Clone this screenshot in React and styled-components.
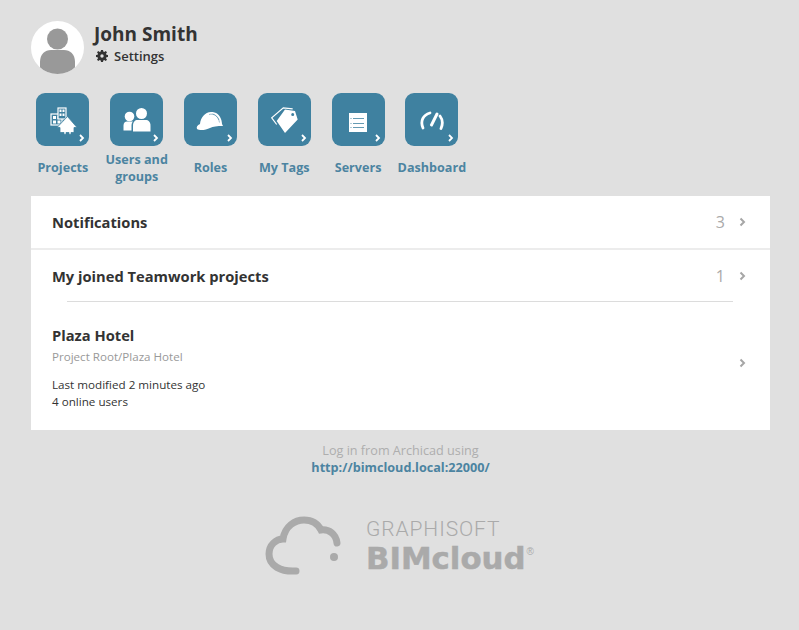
import React from "react";
import styled, { createGlobalStyle } from "styled-components";

const GlobalStyle = createGlobalStyle`
  html, body {
    margin: 0;
    padding: 0;
    background: #e0e0e0;
    font-family: "Open Sans", "Liberation Sans", sans-serif;
  }
`;

const Page = styled.div`
  width: 799px;
  height: 630px;
  overflow: hidden;
  box-sizing: border-box;
  padding: 21px 29px 0 31px;
`;

const Header = styled.div`
  display: flex;
  align-items: flex-start;
  gap: 10px;
`;

const Avatar = styled.div`
  width: 53px;
  height: 53px;
  border-radius: 50%;
  background: #fff;
  overflow: hidden;
`;

const UserName = styled.div`
  font-size: 19px;
  line-height: 26px;
  font-weight: 700;
  color: #333;
`;

const SettingsLink = styled.div`
  display: flex;
  align-items: center;
  gap: 6px;
  margin: 0 0 0 2px;
  font-size: 13px;
  line-height: 18px;
  font-weight: 600;
  color: #333;
`;

const Nav = styled.div`
  display: flex;
  margin: 19px 0 0 -5px;
`;

const NavItem = styled.div`
  width: 73.8px;
  display: flex;
  flex-direction: column;
  align-items: center;
`;

const Tile = styled.div`
  position: relative;
  width: 53px;
  height: 53px;
  border-radius: 9px;
  background: #3f81a0;
  display: flex;
  align-items: center;
  justify-content: center;
`;

const TileArrow = styled.svg`
  position: absolute;
  right: 4px;
  bottom: 4px;
`;

const NavLabel = styled.div`
  height: 35px;
  margin-top: 4px;
  display: flex;
  align-items: center;
  text-align: center;
  font-size: 12.6px;
  line-height: 17px;
  font-weight: 700;
  color: #4c84a1;
  white-space: pre-line;
`;

const Panel = styled.div`
  margin-top: 11px;
  width: 739px;
  height: 234px;
  background: #fff;
`;

const Row = styled.div`
  height: ${(p) => (p.$line ? "52px" : "51px")};
  padding: 0 24px 0 21px;
  display: flex;
  align-items: center;
  border-bottom: ${(p) => (p.$line ? "2px solid #ececec" : "none")};
`;

const RowTitle = styled.div`
  flex: 1;
  font-size: 14.7px;
  font-weight: 700;
  color: #333;
`;

const Count = styled.div`
  font-size: 16px;
  color: #aaa;
  margin-right: 14px;
`;

const Chevron = styled.svg`
  display: block;
`;

const InnerRule = styled.div`
  height: 1px;
  margin: 0 37px 0 36px;
  background: #dcdcdc;
`;

const ProjectRow = styled.div`
  height: 122px;
  padding: 0 24px 0 21px;
  display: flex;
  align-items: center;
`;

const ProjectInfo = styled.div`
  flex: 1;
  align-self: flex-start;
  padding-top: 23px;
`;

const ProjectName = styled.div`
  font-size: 14.7px;
  line-height: 20px;
  font-weight: 700;
  color: #333;
`;

const ProjectPath = styled.div`
  margin-top: 3px;
  font-size: 11.6px;
  line-height: 18px;
  color: #999;
`;

const ProjectMeta = styled.div`
  margin-top: 10px;
  font-size: 11.65px;
  line-height: 17px;
  color: #333;
`;

const LoginNote = styled.div`
  margin-top: 12px;
  text-align: center;
  font-size: 12.65px;
  line-height: 16.500px;
  color: #aeaeae;
`;

const LoginLink = styled.div`
  font-weight: 700;
  color: #4c84a1;
`;

const Logo = styled.div`
  margin: 41px 0 0 234px;
  display: flex;
  align-items: flex-start;
  gap: 25px;
`;

const LogoText = styled.div`
  padding-top: 1px;
  color: #aaa;
`;

const Graphisoft = styled.div`
  font-family: Roboto, sans-serif;
  font-size: 21px;
  line-height: 24px;
  font-weight: 300;
  letter-spacing: 0.9px;
`;

const Bimcloud = styled.div`
  font-family: "DejaVu Sans", sans-serif;
  font-size: 30.8px;
  line-height: 34px;
  font-weight: 700;
  -webkit-text-stroke: 0.5px #aaa;
  white-space: nowrap;
  sup {
    font-family: "Liberation Sans", sans-serif;
    font-size: 10px;
    font-weight: 400;
    line-height: 0;
    -webkit-text-stroke: 0;
    vertical-align: 14px;
    margin-left: 1px;
  }
`;

const W = "#fff";
const TILE = "#3f81a0";

const ProjectsIcon = () => (
  <svg width="32" height="32" viewBox="0 0 32 32">
    <rect x="4" y="10" width="11" height="11" fill="none" stroke={W} strokeWidth="1.200" />
    <path d="M6 12h3v3H6zM10.500 12h3v3h-3zM6 16.500h3v3H6zM10.500 16.500h3v3h-3z" fill={W} />
    <rect x="11" y="4" width="8" height="11" fill={TILE} stroke={W} strokeWidth="1.200" />
    <path d="M12.500 5.500h2v2.500h-2zM15.500 5.500h2v2.500h-2zM12.500 9.500h2v2.500h-2zM15.500 9.500h2v2.500h-2z" fill={W} />
    <path d="M20.500 12.500l9.500 11h-3v5h-3v2h-2v-2h-3v2h-2v-2h-4v-5h-3z" fill={W} stroke={TILE} strokeWidth="0.800" />
  </svg>
);

const UsersIcon = () => (
  <svg width="28" height="25" viewBox="0 0 28 25">
    <circle cx="6.500" cy="9.500" r="4.800" fill={W} />
    <path d="M.5 23.500v-5c0-2.500 1.500-4 3.500-4h6c-1 1-1.500 2.500-1.500 4v5z" fill={W} />
    <circle cx="18.500" cy="6.500" r="5.500" fill={W} />
    <path d="M10 24.500v-6c0-3.500 2-5.500 4.500-5.500h8c3 0 5 2 5 5.500v6z" fill={W} />
  </svg>
);

const HelmetIcon = () => (
  <svg width="28" height="22" viewBox="0 0 28 22">
    <path d="M1 20c-.8-2 .2-4 3-5 .5-6 5-12 11-12 1 0 2.500 0 3.500.4C23 4.500 26 10 26 15l1 2c-6 0-10 .5-13 2-4 2-10 3-13 1z" fill={W} />
    <path d="M13 5.500c5-1.500 9.500 2 10.500 8M16.500 5c3 .5 5.500 3 6.500 6" fill="none" stroke={TILE} strokeWidth="0.500" />
  </svg>
);

const TagIcon = () => (
  <svg width="28" height="30" viewBox="0 0 28 30">
    <path d="M6.700 19.500L1.700 12.800 13.300 2.800 22.700 3.800" fill="none" stroke={W} strokeWidth="1.200" />
    <path d="M15 4.500L25 6l2.700 8.500L15 28 6.700 16zM22.700 8a1.500 1.500 0 100 3 1.500 1.500 0 000-3z" fill={W} fillRule="evenodd" />
  </svg>
);

const ServerIcon = () => (
  <svg width="20" height="19" viewBox="0 0 20 19" style={{ marginTop: 5 }}>
    <rect x="1" y="0" width="18" height="19" fill={W} />
    <path d="M5 5.500h11M5 10.500h11M5 14.500h11" stroke={TILE} strokeWidth="0.800" />
    <path d="M2.500 5.500h1M2.500 10.500h1M2.500 14.500h1" stroke={TILE} strokeWidth="0.800" />
  </svg>
);

const GaugeIcon = () => (
  <svg width="26" height="22" viewBox="0 0 26 22">
    <path d="M4 19C1 12 4 6 11 4" fill="none" stroke={W} strokeWidth="2.800" strokeLinecap="round" />
    <path d="M21 7c3 4 3 8 1 12.500" fill="none" stroke={W} strokeWidth="2.800" strokeLinecap="round" />
    <path d="M12.500 16L18 5" fill="none" stroke={W} strokeWidth="3" strokeLinecap="round" />
  </svg>
);

const GearIcon = () => (
  <svg width="12" height="12" viewBox="0 0 12 12">
    <path
      d="M5 0h2l.3 1.600 1 .4L9.700 1 11 2.300 10 3.700l.4 1L12 5v2l-1.600.3-.4 1L11 9.700 9.700 11l-1.400-1-1 .4L7 12H5l-.3-1.600-1-.4L2.300 11 1 9.700l1-1.400-.4-1L0 7V5l1.600-.3.4-1L1 2.300 2.300 1l1.400 1 1-.4zM6 4.300a1.700 1.700 0 100 3.400 1.700 1.700 0 000-3.400z"
      fill="#333"
      fillRule="evenodd"
    />
  </svg>
);

const RowChevron = () => (
  <Chevron width="7" height="10" viewBox="0 0 7 10">
    <path d="M1.500 1.500L5 5 1.500 8.500" fill="none" stroke="#a6a6a6" strokeWidth="2" />
  </Chevron>
);

const NAV_ITEMS = [
  { label: "Projects", icon: <ProjectsIcon /> },
  { label: "Users and\ngroups", icon: <UsersIcon /> },
  { label: "Roles", icon: <HelmetIcon /> },
  { label: "My Tags", icon: <TagIcon /> },
  { label: "Servers", icon: <ServerIcon /> },
  { label: "Dashboard", icon: <GaugeIcon /> },
];

const App = () => {
  return (
    <Page>
      <GlobalStyle />
      <Header>
        <Avatar>
          <svg width="53" height="53" viewBox="0 0 53 53">
            <circle cx="26.500" cy="18" r="10.500" fill="#999" />
            <path d="M9 53V41c0-8 5-12 11-12h13c6 0 11 4 11 12v12z" fill="#999" />
          </svg>
        </Avatar>
        <div>
          <UserName>John Smith</UserName>
          <SettingsLink>
            <GearIcon />
            Settings
          </SettingsLink>
        </div>
      </Header>

      <Nav>
        {NAV_ITEMS.map((item) => (
          <NavItem key={item.label}>
            <Tile>
              {item.icon}
              <TileArrow width="6" height="8" viewBox="0 0 6 8">
                <path d="M1 1l3 3-3 3" fill="none" stroke="#fff" strokeWidth="1.800" />
              </TileArrow>
            </Tile>
            <NavLabel>
              <span>{item.label}</span>
            </NavLabel>
          </NavItem>
        ))}
      </Nav>

      <Panel>
        <Row $line>
          <RowTitle>Notifications</RowTitle>
          <Count>3</Count>
          <RowChevron />
        </Row>
        <Row>
          <RowTitle>My joined Teamwork projects</RowTitle>
          <Count>1</Count>
          <RowChevron />
        </Row>
        <InnerRule />
        <ProjectRow>
          <ProjectInfo>
            <ProjectName>Plaza Hotel</ProjectName>
            <ProjectPath>Project Root/Plaza Hotel</ProjectPath>
            <ProjectMeta>
              Last modified 2 minutes ago
              <br />4 online users
            </ProjectMeta>
          </ProjectInfo>
          <RowChevron />
        </ProjectRow>
      </Panel>

      <LoginNote>
        Log in from Archicad using
        <LoginLink>http://bimcloud.local:22000/</LoginLink>
      </LoginNote>

      <Logo>
        <svg width="76" height="60" viewBox="0 0 76 60">
          <path
            d="M31 55C16 56 4 50 4 38c0-9 7-15 14-15C20 10 30 4 39 4c8 0 14 4 17 10 8-1 15 4 16 13"
            fill="none"
            stroke="#aaa"
            strokeWidth="7"
            strokeLinecap="round"
          />
          <circle cx="69" cy="41" r="4" fill="#aaa" />
        </svg>
        <LogoText>
          <Graphisoft>GRAPHISOFT</Graphisoft>
          <Bimcloud>
            BIMcloud<sup>®</sup>
          </Bimcloud>
        </LogoText>
      </Logo>
    </Page>
  );
};

export default App;
